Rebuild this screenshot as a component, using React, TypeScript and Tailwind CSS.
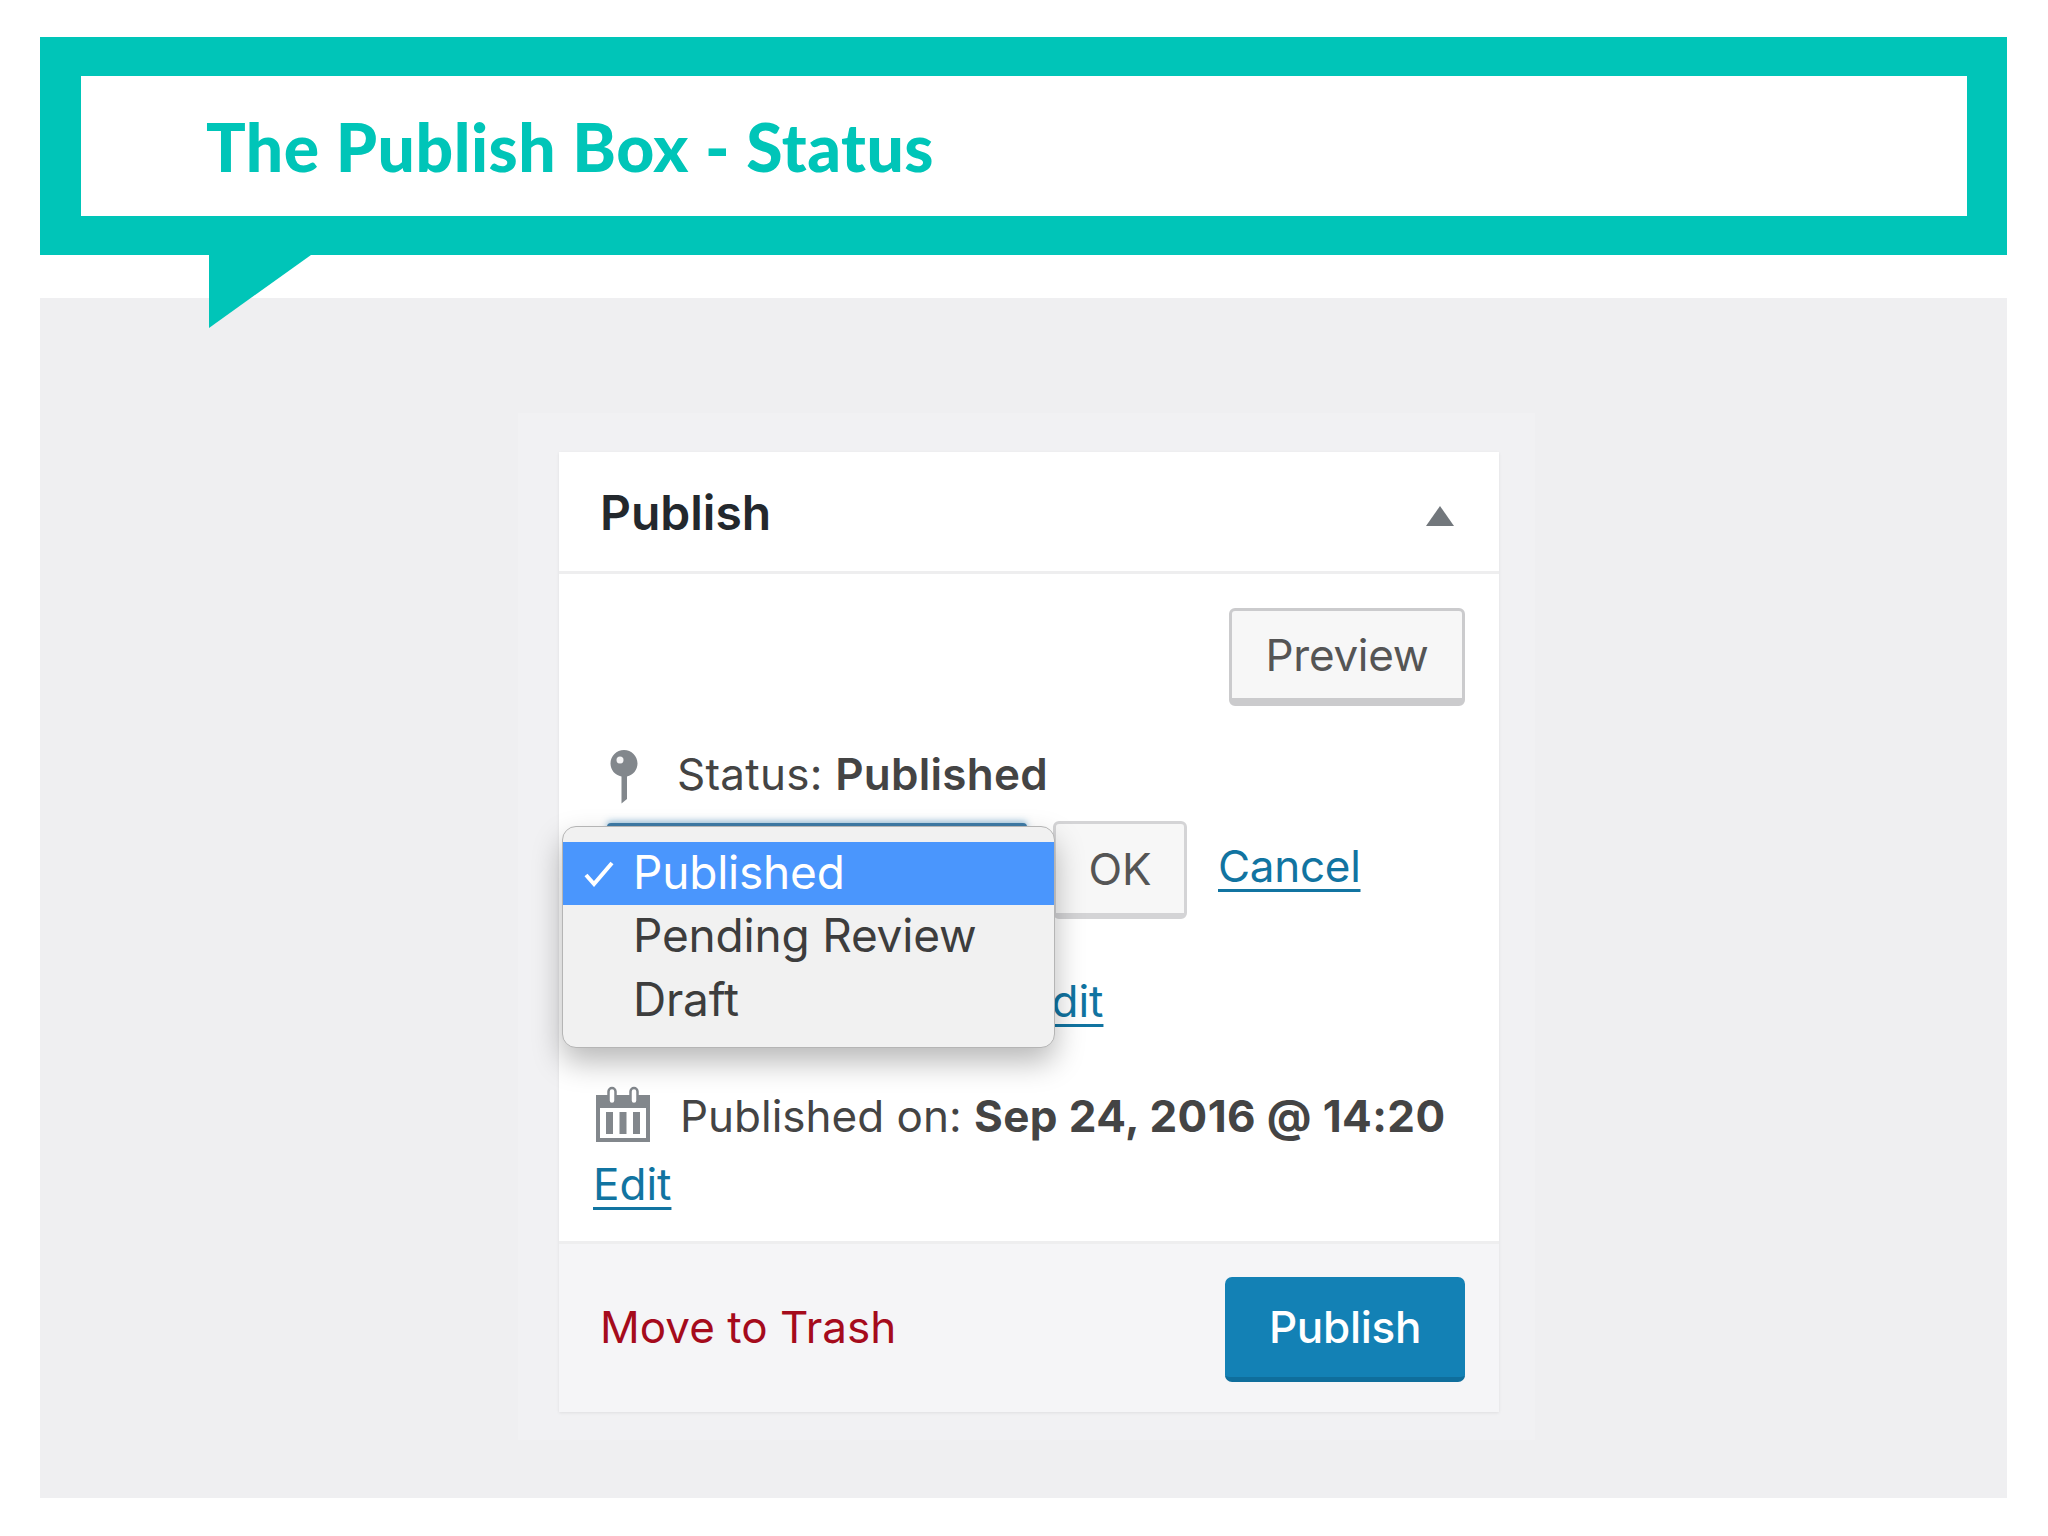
const linkClass = "text-[#1174a1] underline decoration-[3px] underline-offset-[7px]";

function PinIcon() {
  return (
    <svg width="28" height="54" viewBox="0 0 28 54" className="shrink-0 mt-[8px]">
      <path d="M14 0C21.500 0 27.500 6 27.500 13.500C27.500 20 23 25 17 26.500V49L11.500 53.500V26.500C5 25 0.500 20 0.500 13.500C0.500 6 6.500 0 14 0Z" fill="#82878c" />
      <circle cx="10" cy="10" r="3.500" fill="#f4f4f5" />
    </svg>
  );
}

function CalendarIcon() {
  return (
    <svg width="54" height="56" viewBox="0 0 54 56" className="shrink-0 mb-[5px]">
      <path d="M0 9H54V56H0Z" fill="#82878c" />
      <rect x="4" y="22" width="46" height="30" fill="#fff" />
      <rect x="10" y="26" width="7" height="22" fill="#82878c" />
      <rect x="23.500" y="26" width="7" height="22" fill="#82878c" />
      <rect x="37" y="26" width="7" height="22" fill="#82878c" />
      <rect x="12.500" y="2" width="7" height="16" rx="3.500" fill="#fff" stroke="#82878c" strokeWidth="2.500" />
      <rect x="34.500" y="2" width="7" height="16" rx="3.500" fill="#fff" stroke="#82878c" strokeWidth="2.500" />
    </svg>
  );
}

function StatusMenu() {
  return (
    <>
      {/* focused select peeking out above the open menu */}
      <div className="absolute left-[48px] top-[371px] w-[420px] h-[10px] rounded-t-[4px] bg-[#3f7ca8] shadow-[0_-2px_6px_rgba(63,140,190,0.5)]" />
      <div className="absolute left-[3px] top-[374px] w-[493px] h-[222px] pt-[15px] rounded-[14px] bg-[#f1f1f1] border border-[#b5b5b5] shadow-[0_14px_30px_rgba(0,0,0,0.28)] text-[#3d3d3d] text-[46px] leading-[61px] tracking-[-0.2px]">
        <div className="relative h-[63px] pl-[70px] bg-[#4a96fd] text-white">
          <svg width="30" height="26" viewBox="0 0 30 26" className="absolute left-[21px] top-[19px]">
            <path d="M2 14L10 23L28 2" fill="none" stroke="#fff" strokeWidth="4" />
          </svg>
          Published
        </div>
        <div className="h-[64px] pl-[70px]">Pending Review</div>
        <div className="h-[64px] pl-[70px]">Draft</div>
      </div>
    </>
  );
}

export default function App() {
  return (
    <div className="w-[2048px] h-[1536px] bg-white pt-[37px] pl-[40px] font-['Inter',sans-serif]">
      <div className="relative w-[1967px] h-[218px] border-l-[41px] border-r-[40px] border-y-[39px] border-[#00c5b8] bg-white pl-[125px]">
        <h1 className="font-['Lato',sans-serif] font-black text-[66px] leading-[142px] tracking-[0.5px] text-[#00c5b8]">
          The Publish Box - Status
        </h1>
        <svg width="102" height="73" viewBox="0 0 102 73" className="absolute left-[128px] top-[179px] z-10">
          <path d="M0 0H102L0 73Z" fill="#00c5b8" />
        </svg>
      </div>

      <div className="w-[1967px] h-[1200px] mt-[43px] bg-[#efeff1] pt-[115px] pl-[478px]">
        <div className="w-[1017px] h-[1027px] bg-[#f1f1f3] pt-[39px] pl-[41px]">
          <div className="relative w-[940px] h-[960px] bg-white shadow-[0_1px_3px_rgba(0,0,0,0.08)] text-[#444] text-[44px]">
            <div className="flex items-center justify-between h-[122px] pl-[41px] pr-[45px] border-b-[3px] border-[#eeeeef]">
              <h2 className="font-semibold text-[48px] text-[#23282d] mt-[2px]">Publish</h2>
              <div className="w-0 h-0 mt-[8px] border-x-[14px] border-x-transparent border-b-[20px] border-b-[#72777c]" />
            </div>

            <div className="h-[667px] pl-[34px] pr-[34px] pt-[34px]">
              <div className="flex justify-end">
                <div className="w-[236px] h-[98px] rounded-[6px] border-[3px] border-b-[8px] border-[#cbcbcd] bg-[#f7f7f7] flex items-center justify-center text-[#555] tracking-[-0.3px]">
                  Preview
                </div>
              </div>

              <div className="flex items-center h-[60px] mt-[37px] pl-[17px] gap-[39px]">
                <PinIcon />
                <span className="mt-[2px] tracking-[0.25px]">
                  Status: <b className="font-semibold">Published</b>
                </span>
              </div>

              <div className="flex items-start h-[98px] mt-[18px] pl-[460px] gap-[31px]">
                <div className="w-[134px] h-[98px] rounded-[6px] border-[3px] border-b-[6px] border-[#d4d4d6] bg-[#f7f7f7] flex items-center justify-center text-[#555]">
                  OK
                </div>
                <a className={`${linkClass} mt-[12px] tracking-[-0.3px]`}>Cancel</a>
              </div>

              <div className="h-[60px] mt-[49px] pl-[432px]">
                <a className={linkClass}>Edit</a>
              </div>

              <div className="flex items-center h-[60px] mt-[58px] pl-[3px] gap-[30px]">
                <CalendarIcon />
                <span className="whitespace-nowrap">
                  Published on: <b className="font-bold tracking-[0.4px]">Sep 24, 2016 @ 14:20</b>
                </span>
              </div>

              <div className="mt-[5px]">
                <a className={linkClass}>Edit</a>
              </div>
            </div>

            <StatusMenu />

            <div className="flex items-center justify-between h-[171px] pl-[41px] pr-[34px] border-t-[3px] border-[#eeeeef] bg-[#f5f5f7]">
              <a className="text-[#a50b1c] mb-[3px]">Move to Trash</a>
              <div className="w-[240px] h-[105px] mt-[2px] rounded-[7px] border-b-[5px] border-[#0f6e9c] bg-[#1381b5] flex items-center justify-center text-white font-medium tracking-[-0.3px]">
                Publish
              </div>
            </div>
          </div>
        </div>
      </div>
    </div>
  );
}
